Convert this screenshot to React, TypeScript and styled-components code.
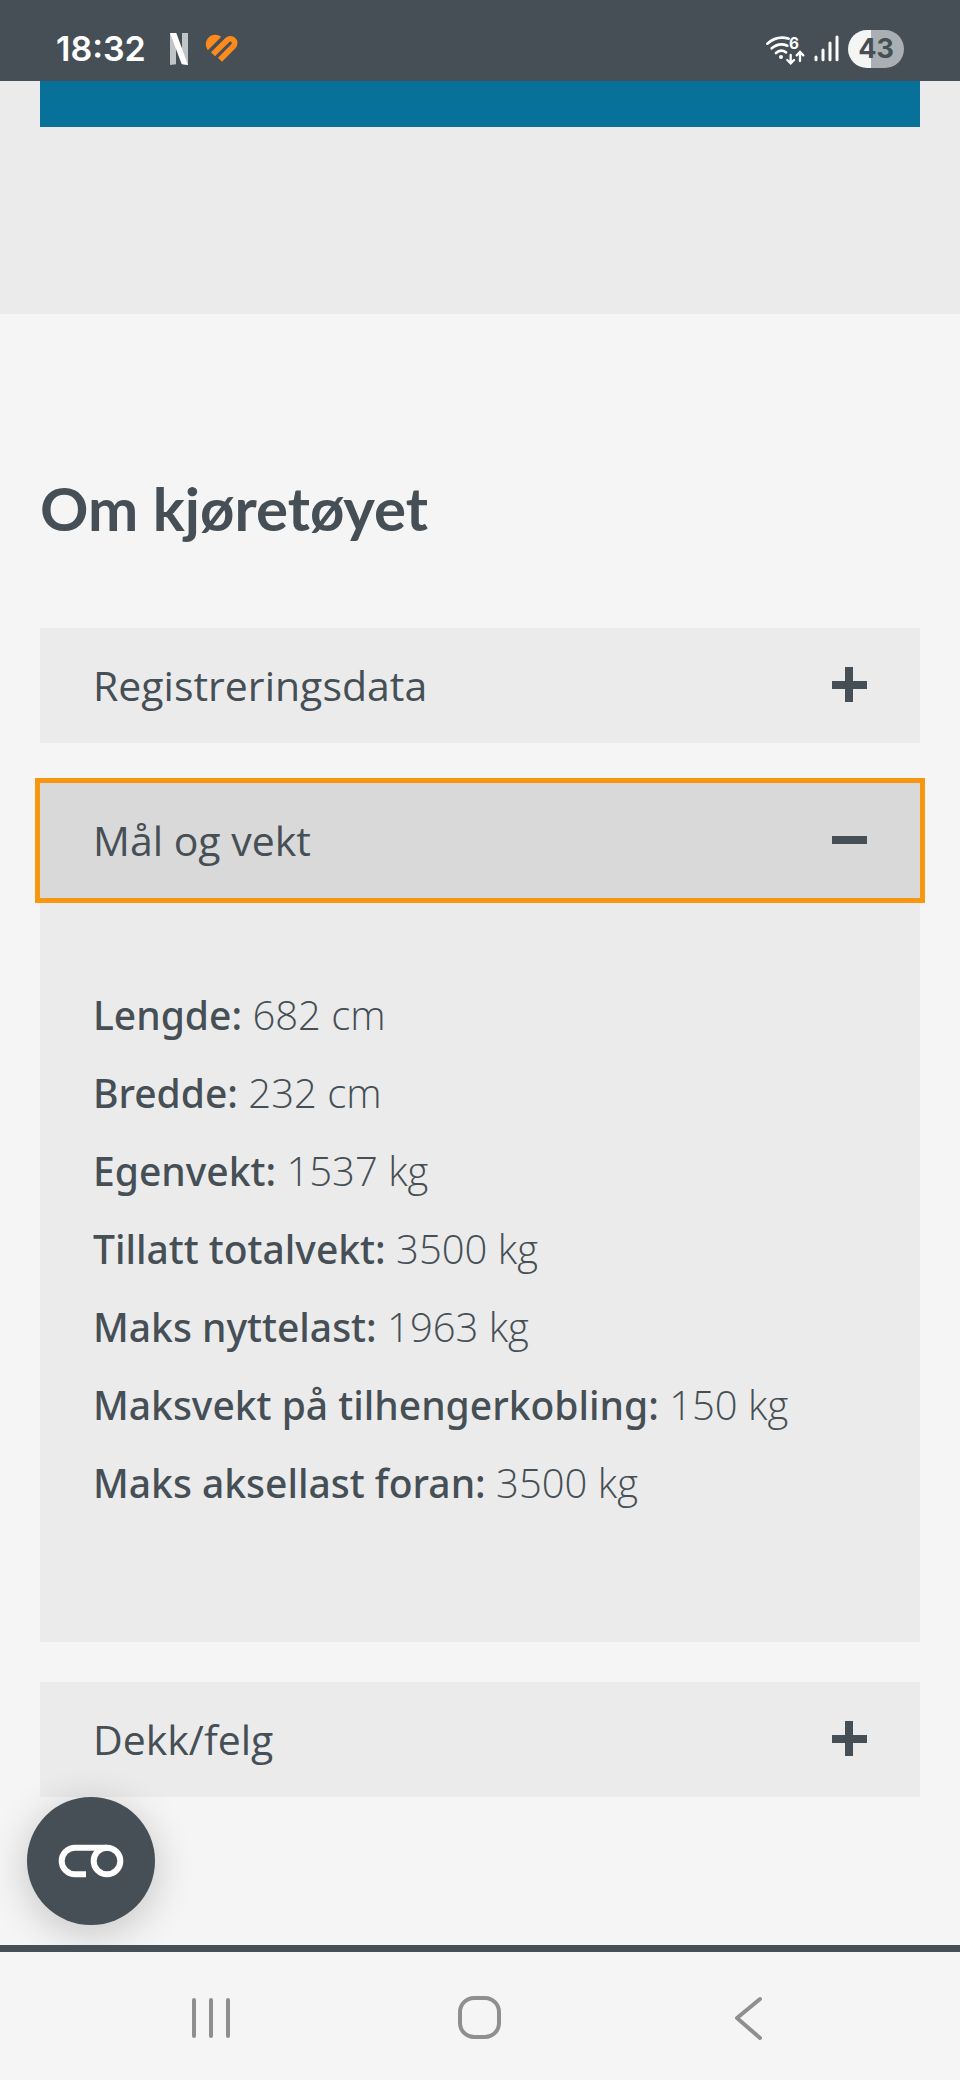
import React, { useState } from 'react';
import styled, { createGlobalStyle } from 'styled-components';

const ink = '#454f55';
const paper = '#f5f5f5';
const panel = '#ebebeb';

const GlobalStyle = createGlobalStyle`
  *, *::before, *::after { box-sizing: border-box; }
  body {
    margin: 0;
    background: ${paper};
    color: ${ink};
    font-family: 'Open Sans', 'Noto Sans', sans-serif;
  }
`;

const Screen = styled.div`
  display: flex;
  flex-direction: column;
  min-height: 100vh;
`;

const StatusBar = styled.header`
  display: flex;
  align-items: center;
  justify-content: space-between;
  height: 81px;
  padding: 16px 56px 0;
  background: ${ink};
`;

const StatusGroup = styled.div<{ $gap: number }>`
  display: flex;
  align-items: center;
  gap: ${(p) => p.$gap}px;
`;

const Clock = styled.time`
  margin-right: 8px;
  color: #fff;
  font: 600 34px/40px Inter, sans-serif;
`;

const Battery = styled.span`
  display: flex;
  align-items: center;
  justify-content: center;
  width: 56px;
  height: 38px;
  border-radius: 19px;
  background: linear-gradient(90deg, #f4f5f5 41%, #a9afb2 41%);
  color: ${ink};
  font: 700 27px/38px Inter, sans-serif;
`;

const Hero = styled.section`
  height: 233px;
  padding: 0 40px;
  background: ${panel};
`;

const HeroBanner = styled.div`
  height: 46px;
  background: #087199;
`;

const Main = styled.main`
  position: relative;
  flex: 1;
  padding: 154px 40px 147px;
`;

const Heading = styled.h1`
  margin: 0 0 80px;
  font: 700 60px/80px Lato, sans-serif;
`;

const Accordion = styled.div`
  display: flex;
  flex-direction: column;
  gap: 40px;
`;

const SectionTitle = styled.h2`
  margin: 0;
  font-size: 41px;
`;

const Toggle = styled.button<{ $open: boolean }>`
  display: flex;
  align-items: center;
  justify-content: space-between;
  width: 100%;
  height: 115px;
  padding: 0 53px 2px;
  border: 0;
  background: ${(p) => (p.$open ? '#d9d9d9' : panel)};
  outline: ${(p) => (p.$open ? '5px solid #f8970f' : 'none')};
  color: inherit;
  font: inherit;
  font-weight: 400;
  text-align: left;
  cursor: pointer;
`;

const Facts = styled.ul`
  margin: 0;
  padding: 78px 53px 120px;
  background: ${panel};
  list-style: none;
`;

const Fact = styled.li`
  font-size: 40px;
  font-weight: 300;
  line-height: 78px;
`;

const FactLabel = styled.span`
  font-family: 'Noto Sans', sans-serif;
  font-size: 39px;
  font-weight: 500;
  line-height: 1;
`;

const ConsentButton = styled.button`
  position: absolute;
  left: 27px;
  bottom: 20px;
  display: flex;
  align-items: center;
  justify-content: center;
  width: 128px;
  height: 128px;
  padding: 0;
  border: 0;
  border-radius: 50%;
  background: ${ink};
  box-shadow: 0 8px 40px rgba(0, 0, 0, 0.2);
  cursor: pointer;
`;

const NavBar = styled.nav`
  position: relative;
  display: flex;
  align-items: center;
  height: 135px;
  padding: 3px 8% 0;
  border-top: 7px solid ${ink};
  background: ${paper};
`;

const NavButton = styled.button`
  display: flex;
  flex: 1;
  align-items: center;
  justify-content: center;
  height: 100%;
  padding: 0;
  border: 0;
  background: none;
  cursor: pointer;
`;

const NavIcon = styled.svg`
  width: 48px;
  height: 48px;
  fill: none;
  stroke: #8f8f8f;
  stroke-width: 4;
  stroke-linecap: round;
  stroke-linejoin: round;
`;

const NetflixIcon = () => (
  <svg width="18" height="32" viewBox="0 0 54 96" aria-hidden="true">
    <path d="M0 0H18V94L0 96ZM36 0H54V96L36 94Z" fill="#bfc4c7" />
    <path d="M0 0H19L54 96L35 93Z" fill="#fff" />
  </svg>
);

const HeartIcon = () => (
  <svg width="34" height="30" viewBox="0 0 102 90" aria-hidden="true">
    <path d="M12 45A26 26 0 0 1 48 9Z" fill="#fd8a1f" stroke="#fd8a1f" strokeWidth="5" strokeLinejoin="round" />
    <path
      d="M27 61L70 18A13 13 0 0 1 88 37L48 77"
      fill="none"
      stroke="#fd8a1f"
      strokeWidth="17"
    />
  </svg>
);

const WifiIcon = () => (
  <svg width="40" height="32" viewBox="0 0 120 96" aria-hidden="true">
    <g fill="none" stroke="#fff" strokeWidth="8" strokeLinecap="round">
      <path d="M7 32Q35 7 71 17" />
      <path d="M20 46Q42 27 67 38" />
      <path d="M33 60Q47 47 63 58" />
      <path d="M77 66V90M67 81L77 91L87 81" strokeWidth="7" />
      <path d="M105 84V58M95 67L105 57L115 67" strokeWidth="7" />
    </g>
    <circle cx="48" cy="72" r="6" fill="#fff" />
    <text x="72" y="47" fill="#fff" fontFamily="Inter, sans-serif" fontWeight="700" fontSize="46">
      6
    </text>
  </svg>
);

const SignalIcon = () => (
  <svg width="25" height="27" viewBox="0 0 75 81" aria-hidden="true">
    <path
      d="M6 66V74M27 45V74M48 24V74M69 6V74"
      stroke="#fff"
      strokeWidth="9"
      strokeLinecap="round"
    />
  </svg>
);

const ToggleIcon = ({ open }: { open: boolean }) => (
  <svg width="35" height="35" viewBox="0 0 35 35" aria-hidden="true">
    <path d={open ? 'M0 14H35V22H0Z' : 'M0 14H13V0H21V14H35V22H21V35H13V22H0Z'} fill={ink} />
  </svg>
);

const ConsentIcon = () => (
  <svg width="66" height="34" viewBox="0 0 198 102" fill="none" stroke="#fff" strokeWidth="18" aria-hidden="true">
    <path d="M84 91H51A40 40 0 0 1 51 11H147" />
    <circle cx="147" cy="51" r="40" />
  </svg>
);

type Section = { title: string; facts: [string, string][] };

const sections: Section[] = [
  { title: 'Registreringsdata', facts: [] },
  {
    title: 'Mål og vekt',
    facts: [
      ['Lengde', '682 cm'],
      ['Bredde', '232 cm'],
      ['Egenvekt', '1537 kg'],
      ['Tillatt totalvekt', '3500 kg'],
      ['Maks nyttelast', '1963 kg'],
      ['Maksvekt på tilhengerkobling', '150 kg'],
      ['Maks aksellast foran', '3500 kg'],
    ],
  },
  { title: 'Dekk/felg', facts: [] },
];

export default function App() {
  const [openTitle, setOpenTitle] = useState('Mål og vekt');

  return (
    <Screen>
      <GlobalStyle />
      <StatusBar>
        <StatusGroup $gap={16}>
          <Clock>18:32</Clock>
          <NetflixIcon />
          <HeartIcon />
        </StatusGroup>
        <StatusGroup $gap={9}>
          <WifiIcon />
          <SignalIcon />
          <Battery>43</Battery>
        </StatusGroup>
      </StatusBar>
      <Hero>
        <HeroBanner />
      </Hero>
      <Main>
        <Heading>Om kjøretøyet</Heading>
        <Accordion>
          {sections.map(({ title, facts }) => {
            const open = title === openTitle;
            return (
              <section key={title}>
                <SectionTitle>
                  <Toggle
                    type="button"
                    $open={open}
                    aria-expanded={open}
                    onClick={() => setOpenTitle(open ? '' : title)}
                  >
                    {title}
                    <ToggleIcon open={open} />
                  </Toggle>
                </SectionTitle>
                {open && facts.length > 0 && (
                  <Facts>
                    {facts.map(([label, value]) => (
                      <Fact key={label}>
                        <FactLabel>{label}:</FactLabel> {value}
                      </Fact>
                    ))}
                  </Facts>
                )}
              </section>
            );
          })}
        </Accordion>
        <ConsentButton type="button" aria-label="Samtykke">
          <ConsentIcon />
        </ConsentButton>
      </Main>
      <NavBar>
        <NavButton type="button" aria-label="Siste apper">
          <NavIcon viewBox="0 0 48 48">
            <path d="M7 6V42M24 6V42M41 6V42" />
          </NavIcon>
        </NavButton>
        <NavButton type="button" aria-label="Hjem">
          <NavIcon viewBox="0 0 48 48">
            <rect x="4" y="4" width="39" height="39" rx="14" />
          </NavIcon>
        </NavButton>
        <NavButton type="button" aria-label="Tilbake">
          <NavIcon viewBox="0 0 48 48">
            <path d="M35 5L12 24L35 44" />
          </NavIcon>
        </NavButton>
      </NavBar>
    </Screen>
  );
}
